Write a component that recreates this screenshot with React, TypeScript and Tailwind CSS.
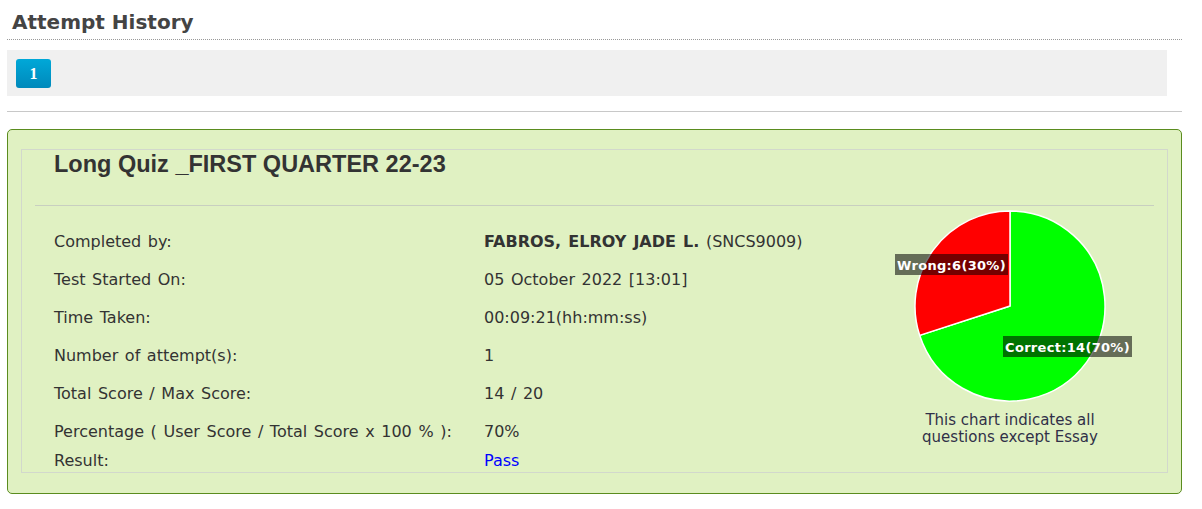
import React from "react";

const rows: { label: string; value: React.ReactNode }[] = [
  {
    label: "Completed by:",
    value: (
      <span>
        <span className="font-bold">FABROS, ELROY JADE L.</span> (SNCS9009)
      </span>
    ),
  },
  { label: "Test Started On:", value: "05 October 2022 [13:01]" },
  { label: "Time Taken:", value: "00:09:21(hh:mm:ss)" },
  { label: "Number of attempt(s):", value: "1" },
  { label: "Total Score / Max Score:", value: "14 / 20" },
  { label: "Percentage ( User Score / Total Score x 100 % ):", value: "70%" },
];

function Pie() {
  const cx = 130;
  const cy = 100;
  const r = 95;
  const a2 = ((-90 - 108) * Math.PI) / 180;
  const x2 = cx + r * Math.cos(a2);
  const y2 = cy + r * Math.sin(a2);
  const redPath = `M ${cx} ${cy} L ${cx} ${cy - r} A ${r} ${r} 0 0 0 ${x2} ${y2} Z`;
  const greenPath = `M ${cx} ${cy} L ${cx} ${cy - r} A ${r} ${r} 0 1 1 ${x2} ${y2} Z`;
  return (
    <svg width="260" height="200" viewBox="0 0 260 200">
      <path d={greenPath} fill="#00ff00" stroke="#ffffff" strokeWidth="1.5" strokeLinejoin="round" />
      <path d={redPath} fill="#ff0000" stroke="#ffffff" strokeWidth="1.5" strokeLinejoin="round" />
      <rect x="15" y="48" width="113" height="21" fill="rgba(0,0,0,0.55)" />
      <text
        x="71.5"
        y="63.5"
        textAnchor="middle"
        fill="#ffffff"
        fontFamily="'DejaVu Sans', Verdana, sans-serif"
        fontWeight="bold"
        fontSize="13"
        letterSpacing="0.3"
      >
        Wrong:6(30%)
      </text>
      <rect x="123" y="130" width="129" height="21" fill="rgba(0,0,0,0.55)" />
      <text
        x="187.5"
        y="145.5"
        textAnchor="middle"
        fill="#ffffff"
        fontFamily="'DejaVu Sans', Verdana, sans-serif"
        fontWeight="bold"
        fontSize="13"
        letterSpacing="0.3"
      >
        Correct:14(70%)
      </text>
    </svg>
  );
}

export default function App() {
  return (
    <div className="w-[1202px] h-[509px] bg-white pl-[7px] pr-[20px] font-['DejaVu_Sans',Verdana,sans-serif] text-[#333]">
      <div className="h-[40px] border-b border-dotted border-[#999] pl-[5px] pt-[9px]">
        <h2 className="text-[20px] leading-[26px] font-bold text-[#444]">Attempt History</h2>
      </div>
      <div className="mt-[10px] mr-[15px] h-[46px] bg-[#f0f0f0] pl-[9px] pt-[9px]">
        <button className="w-[35px] h-[29px] rounded-[3px] bg-gradient-to-b from-[#00a8d8] to-[#0089bb] text-white font-bold text-[16px] font-['Liberation_Serif',serif] flex items-center justify-center">
          1
        </button>
      </div>
      <div className="mt-[15px] border-t border-[#c8c8c8]" />
      <div className="mt-[17px] h-[365px] rounded-[5px] border border-[#5a8c1e] bg-[#e0f1c2] px-[13px] pt-[19px] pb-[20px]">
        <div className="h-full border border-[#d2d8cc] px-[13px]">
          <div className="h-[56px] border-b border-[#c8cfc0] pl-[19px]">
            <h3 className="font-['Liberation_Sans',Arial,sans-serif] font-bold text-[23.5px] leading-[28px] text-[#333]">
              Long Quiz _FIRST QUARTER 22-23
            </h3>
          </div>
          <div className="flex">
            <div className="flex-1 pl-[19px] pt-[17px] text-[16px] [word-spacing:1.5px]">
              {rows.map((r) => (
                <div key={r.label} className="flex h-[38px] items-center">
                  <div className="w-[430px]">{r.label}</div>
                  <div>{r.value}</div>
                </div>
              ))}
              <div className="flex h-[20px] items-center">
                <div className="w-[430px]">Result:</div>
                <div className="text-[#0000ff]">Pass</div>
              </div>
            </div>
            <div className="w-[260px] mr-[14px] flex flex-col items-center">
              <Pie />
              <div className="mt-[6px] text-center text-[15px] leading-[17px] text-[#303048]">
                This chart indicates all
                <br />
                questions except Essay
              </div>
            </div>
          </div>
        </div>
      </div>
    </div>
  );
}
